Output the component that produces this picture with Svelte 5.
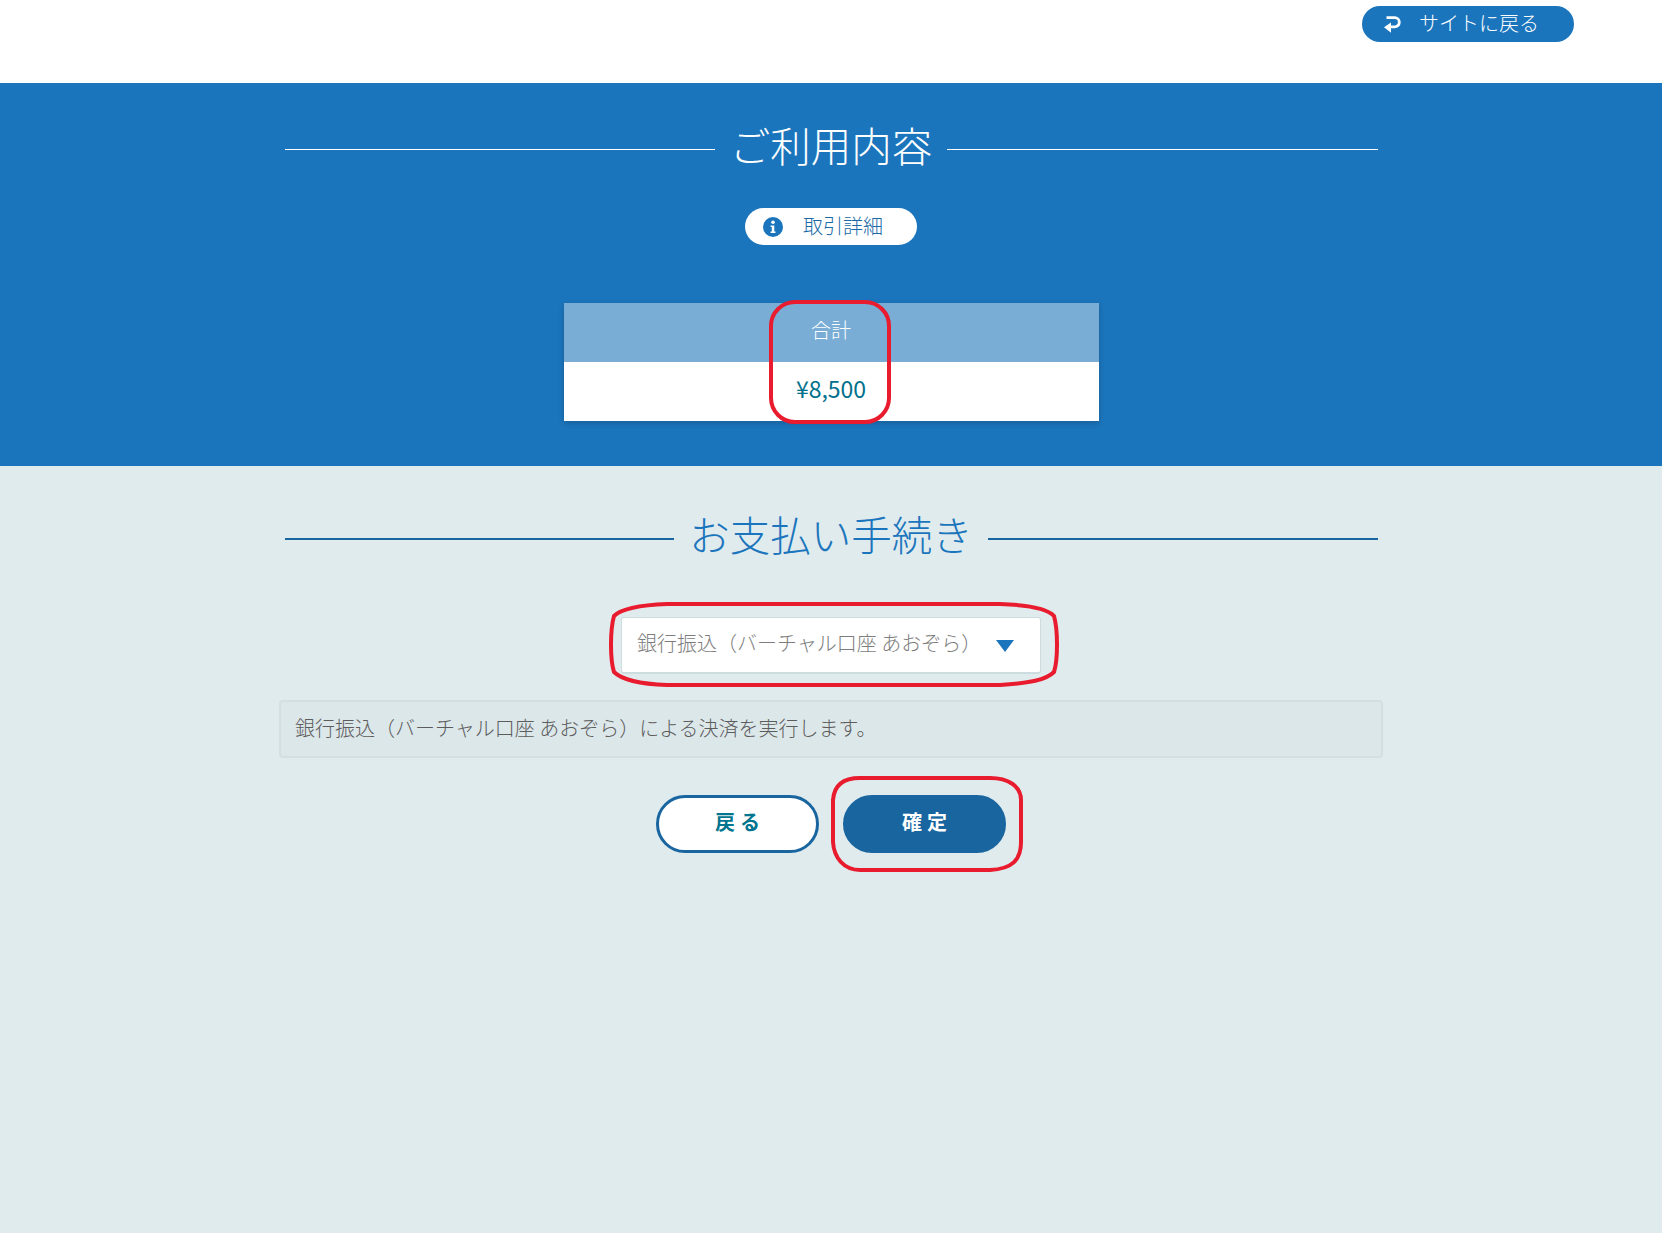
<script>
  const total = '¥8,500';
  const method = '銀行振込（バーチャル口座 あおぞら）';
</script>

<div class="page">
  <header class="top">
    <a class="site-back" href="#back">
      <svg class="back-icon" viewBox="0 0 20 20" aria-hidden="true">
        <path d="M3.5 3.6h8.2a4.6 4.6 0 0 1 0 9.2H7" fill="none" stroke="currentColor" stroke-width="2.8" />
        <path d="M1 13.2 8 8.4v10.4z" fill="currentColor" />
      </svg>
      <span>サイトに戻る</span>
    </a>
  </header>

  <section class="usage">
    <h2 class="heading light"><span>ご利用内容</span></h2>
    <a class="detail" href="#detail">
      <svg class="info" viewBox="0 0 20 20" aria-hidden="true">
        <circle cx="10" cy="10" r="10" fill="#1b75bc" />
        <circle cx="10" cy="5.2" r="1.8" fill="#fff" />
        <path d="M7.6 8.4h3.7v6.2h1.2v1.5H7.6v-1.5h1.2V9.9H7.6z" fill="#fff" />
      </svg>
      <span>取引詳細</span>
    </a>
    <div class="summary">
      <div class="summary-head">合計</div>
      <div class="summary-body">{total}</div>
    </div>
  </section>

  <section class="payment">
    <h2 class="heading dark"><span>お支払い手続き</span></h2>
    <div class="select">
      <span>{method}</span>
      <i class="caret"></i>
    </div>
    <p class="note">{method}による決済を実行します。</p>
    <div class="actions">
      <button class="btn ghost">戻る</button>
      <button class="btn solid">確定</button>
    </div>
  </section>

  <svg class="marks" viewBox="0 0 1662 1233" aria-hidden="true">
    <rect x="771" y="302" width="118" height="120" rx="24" />
    <path d="M667 604H1000C1030 605 1048 609 1054 616C1058 630 1058 660 1054 672C1046 680 1030 683 1000 685H667C640 684 622 680 614 672C610 660 610 630 614 616C622 608 640 605 667 604Z" />
    <path d="M860 778H990C1008 778 1021 786 1021 800V842C1021 860 1012 869 990 870H860C844 870 834 858 833 842V800C834 786 842 778 860 778Z" />
  </svg>
</div>

<style>
  :global(body) {
    margin: 0;
    background: #e0ebee;
    font-family: "Noto Sans CJK JP", "Noto Sans", sans-serif;
  }
  .page {
    position: relative;
    height: 1233px;
    overflow: hidden;
    background: #e0ebee;
  }
  .top {
    height: 83px;
    box-sizing: border-box;
    padding: 6px 88px 0 0;
    display: flex;
    justify-content: flex-end;
    align-items: flex-start;
    background: #fff;
  }
  .site-back {
    width: 212px;
    height: 36px;
    box-sizing: border-box;
    padding: 0 0 0 21px;
    display: flex;
    align-items: center;
    gap: 16px;
    border-radius: 18px;
    background: #1b75bc;
    color: #fff;
    font-size: 20px;
    font-weight: 300;
    text-decoration: none;
  }
  .site-back span { margin-bottom: 3px; }
  .back-icon { width: 20px; height: 20px; }
  .usage {
    height: 383px;
    box-sizing: border-box;
    padding-top: 38px;
    display: flex;
    flex-direction: column;
    align-items: center;
    background: #1b75bc;
  }
  .heading {
    width: 1093px;
    height: 56px;
    flex: none;
    margin: 0;
    display: flex;
    align-items: center;
    font-weight: 300;
    font-size: 40.5px;
    line-height: 56px;
    white-space: nowrap;
  }
  .heading span { margin-bottom: 8px; }
  .heading::before,
  .heading::after {
    content: "";
    flex: 1;
    height: 1px;
    background: currentColor;
  }
  .heading.light {
    gap: 15px;
    color: #fff;
  }
  .heading.dark {
    gap: 15px;
    color: #1b75bc;
  }
  .heading.dark span { margin-bottom: 10px; }
  .heading.dark::before,
  .heading.dark::after {
    height: 2px;
    background: #19659f;
  }
  .detail {
    width: 172px;
    height: 37px;
    margin-top: 31px;
    box-sizing: border-box;
    padding-left: 18px;
    display: flex;
    align-items: center;
    gap: 20px;
    border-radius: 19px;
    background: #fff;
    color: #1a6aa8;
    font-size: 20px;
    font-weight: 300;
    text-decoration: none;
  }
  .detail span { margin-bottom: 3px; }
  .info { width: 20px; height: 20px; }
  .summary {
    width: 535px;
    margin-top: 58px;
    box-shadow: 0 2px 6px rgba(0, 0, 0, 0.2);
    text-align: center;
  }
  .summary-head {
    height: 59px;
    line-height: 53px;
    background: #79add6;
    color: #fff;
    font-size: 20px;
    font-weight: 300;
  }
  .summary-body {
    height: 59px;
    line-height: 53px;
    background: #fff;
    color: #00708c;
    font-size: 23px;
    font-weight: 400;
  }
  .payment {
    display: flex;
    flex-direction: column;
    align-items: center;
    padding-top: 45px;
  }
  .select {
    width: 420px;
    height: 57px;
    margin-top: 50px;
    box-sizing: border-box;
    padding: 0 26px 0 15px;
    display: flex;
    align-items: center;
    justify-content: space-between;
    border: 1px solid #cddcdf;
    border-bottom-width: 2px;
    border-radius: 3px;
    background: #fff;
    color: #7d7d7d;
    font-size: 20px;
    font-weight: 300;
    white-space: nowrap;
  }
  .select span { margin-bottom: 5px; }
  .caret {
    width: 0;
    height: 0;
    margin-top: 2px;
    border-left: 9px solid transparent;
    border-right: 9px solid transparent;
    border-top: 12px solid #1b75bc;
  }
  .note {
    width: 1104px;
    height: 58px;
    margin: 26px 0 0;
    box-sizing: border-box;
    padding: 0 14px 4px;
    display: flex;
    align-items: center;
    border: 2px solid #d2e0e3;
    border-radius: 4px;
    background: #dce7ea;
    color: #5c5c5c;
    font-size: 20px;
    font-weight: 300;
  }
  .actions {
    margin-top: 37px;
    display: flex;
    gap: 24px;
  }
  .btn {
    width: 163px;
    height: 58px;
    padding: 0 0 5px 5px;
    border-radius: 29px;
    font-family: inherit;
    font-size: 20px;
    font-weight: 700;
    letter-spacing: 5px;
  }
  .ghost {
    border: 3px solid #19659f;
    background: #fff;
    color: #00758f;
  }
  .solid {
    border: 3px solid #19659f;
    background: #19659f;
    color: #fff;
  }
  .marks {
    position: absolute;
    inset: 0;
    width: 1662px;
    height: 1233px;
    pointer-events: none;
  }
  .marks rect,
  .marks path {
    fill: none;
    stroke: #e81c2e;
    stroke-width: 4;
  }
</style>
